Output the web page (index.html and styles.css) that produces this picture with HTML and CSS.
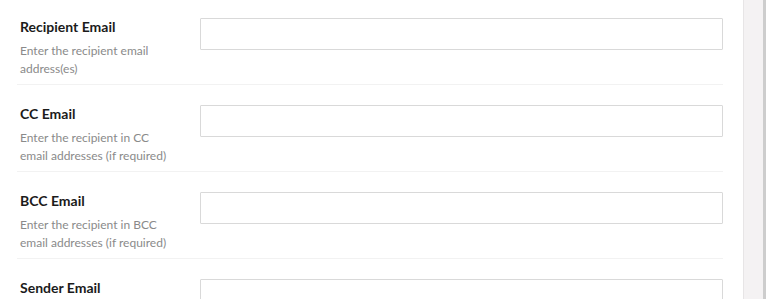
FILE: index.html
```html
<!DOCTYPE html>
<html lang="en">
<head>
<meta charset="utf-8">
<title>Email settings</title>
<link rel="stylesheet" href="styles.css">
</head>
<body>
<div class="page">
  <main class="content">
    <div class="form">
      <div class="row">
        <div class="label">
          <div class="title">Recipient Email</div>
          <div class="desc">Enter the recipient email address(es)</div>
        </div>
        <input class="field" type="text">
      </div>
      <div class="row">
        <div class="label">
          <div class="title">CC Email</div>
          <div class="desc">Enter the recipient in CC email addresses (if required)</div>
        </div>
        <input class="field" type="text">
      </div>
      <div class="row">
        <div class="label">
          <div class="title">BCC Email</div>
          <div class="desc">Enter the recipient in BCC email addresses (if required)</div>
        </div>
        <input class="field" type="text">
      </div>
      <div class="row">
        <div class="label">
          <div class="title">Sender Email</div>
          <div class="desc">Enter the sender email address</div>
        </div>
        <input class="field" type="text">
      </div>
    </div>
  </main>
  <aside class="side"></aside>
</div>
</body>
</html>
```

FILE: styles.css
```css
html, body {
  margin: 0;
  padding: 0;
  height: 100%;
  overflow: hidden;
  background: #ffffff;
}

body {
  font-family: Lato, "Open Sans", sans-serif;
}

.page {
  display: flex;
  height: 299px;
  overflow: hidden;
}

.content {
  flex: 0 0 743px;
  padding-left: 17px;
  box-sizing: border-box;
}

.form {
  width: 706px;
  margin-top: -2px;
}

.row {
  display: flex;
  align-items: flex-start;
  gap: 20px;
  padding: 20px 0 6px 3px;
  border-bottom: 1px solid #f2f2f2;
}

.label {
  flex: 0 0 160px;
}

.title {
  font-size: 14px;
  font-weight: 700;
  line-height: 17px;
  color: #1b1b1b;
  margin-bottom: 7px;
}

.desc {
  font-size: 12px;
  line-height: 18px;
  color: #8a8a8a;
}

.field {
  flex: 1 1 auto;
  height: 32px;
  box-sizing: border-box;
  margin: 0;
  border: 1px solid #d9d9d9;
  border-radius: 1px;
  background: #ffffff;
  outline: none;
}

.side {
  flex: 1 1 auto;
  background: #f4f2f3;
  border-left: 1px solid #e7e5e6;
  border-right: 3px solid #cdcdcd;
}
```
